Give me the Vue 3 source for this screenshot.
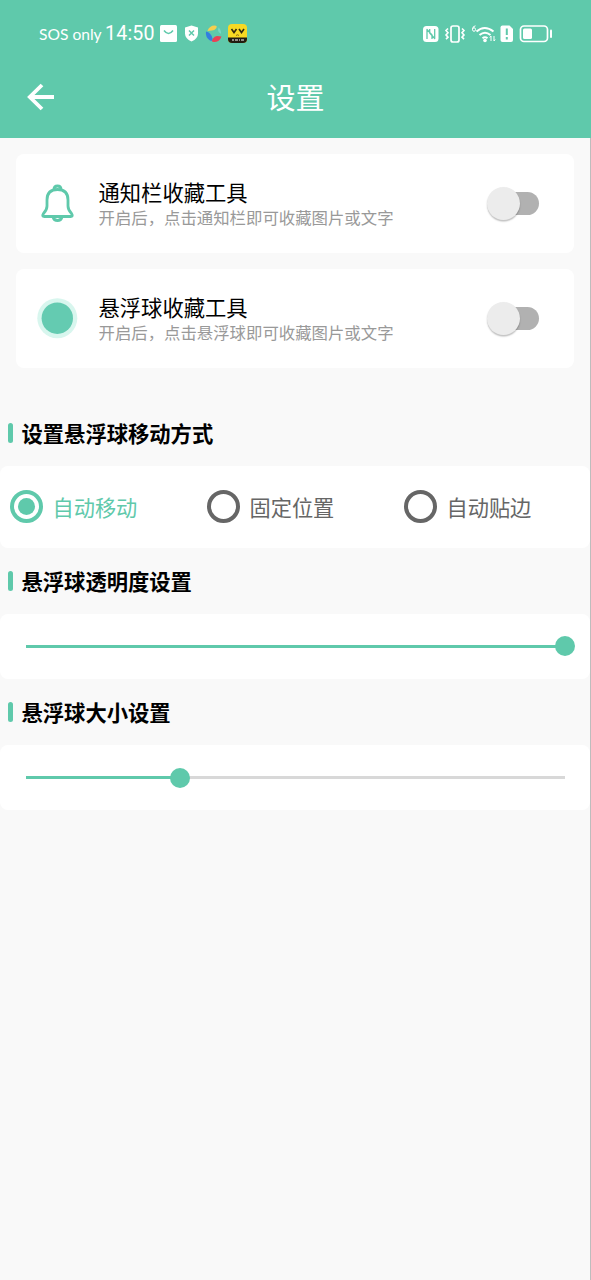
<script setup>
import { ref } from 'vue'

const tools = ref([
  { icon: 'bell', title: '通知栏收藏工具', hint: '开启后，点击通知栏即可收藏图片或文字' },
  { icon: 'ball', title: '悬浮球收藏工具', hint: '开启后，点击悬浮球即可收藏图片或文字' }
])
const modes = ['自动移动', '固定位置', '自动贴边']
const mode = ref('自动移动')
const sliders = ref([
  { title: '悬浮球透明度设置', value: 100 },
  { title: '悬浮球大小设置', value: 28.6 }
])
</script>

<template>
  <div class="screen">
    <header class="header">
      <div class="status">
        <span class="carrier">SOS only</span>
        <span class="clock">14:50</span>
        <svg class="status-left" width="90" height="22" viewBox="0 0 90 22">
          <path d="M1.500 2h14q1.500 0 1.500 1.500v14q0 1.500-1.500 1.500h-14Q0 19 0 17.500v-14Q0 2 1.500 2z" fill="#fff" />
          <path d="M4 7.500q4.500 6 9 0" fill="none" stroke="#5fc9ab" stroke-width="1.500" />
          <path d="M31.500 2.500l6.500 2v6q0 5-6.500 8q-6.500-3-6.500-8v-6z" fill="#fff" />
          <path d="M29 7.500l5 5M34 7.500l-5 5" stroke="#5fc9ab" stroke-width="1.500" />
          <path d="M47.500 8q2-5.500 7-5.500q3.500 0 1.500 3q-1.500 2-4 2t-4.500 .5z" fill="#f5cf50" />
          <path d="M46 8.500q5 1 6.500 7q.2 3.500-2.500 2q-5-3.500-4-9z" fill="#327ee0" />
          <path d="M53 15.500q1.500-2.500 4-2.500t4.500.5q-2 5.500-7.500 5.500q-3.500 0-1-3.500z" fill="#eb4055" />
          <path d="M58.500 4.500q3 2.500 2.500 6.500q-3-1.500-3-4z" fill="#77d7c5" />
          <rect x="68" y="1" width="19" height="19" rx="4" fill="#f8d923" />
          <path d="M68 14.500h19V16q0 4-4 4H72q-4 0-4-4z" fill="#211b10" />
          <path d="M71.500 6l2.500 3.500l2.500-3.500M79 6l2.500 3.500l2.500-3.500" fill="none" stroke="#332a10" stroke-width="1.600" />
          <path d="M76 12.500q1.500-1.500 3 0" fill="none" stroke="#8c6a18" />
          <path d="M72 17h2m1 0h3m1 0h1m1 0h3" stroke="#fff" stroke-width="1.200" />
        </svg>
        <svg class="status-right" width="132" height="22" viewBox="0 0 132 22">
          <rect x="1" y="3" width="15.500" height="16" rx="3.500" fill="#fff" />
          <path d="M5 16V6.500l5 5.500v4M12.700 6v9.500l-5-5.500V6" fill="none" stroke="#5fc9ab" stroke-width="1.300" stroke-linejoin="round" />
          <g fill="none" stroke="#fff">
            <rect x="29" y="3" width="8" height="16" rx="2" stroke-width="1.700" />
            <path d="M26 5.500l-2 2l2 2.200l-2 2.200l2 2.200l-2 2M40 5.500l2 2l-2 2.200l2 2.200l-2 2.200l2 2" stroke-width="1.600" />
            <path d="M53.500 2.800Q50.500 3 50.500 6.500M50.500 6.500a1.500 1.800 0 1 0 3 0a1.500 1.800 0 1 0-3 0" stroke-width="1" />
            <path d="M54.500 8.500q8-7 17 0M57.500 12q5.500-4.500 11 0M60.500 15.200q2.500-2 5 0" stroke-width="2" />
            <path d="M69 13v5M72 18v-5M67.800 14.500l1.200-1.500M73.200 16.500l-1.200 1.500" stroke-width="1" />
          </g>
          <circle cx="63" cy="17.500" r="1.800" fill="#fff" />
          <path d="M80.500 2.500h7l3.500 3.500v11q0 2-2 2h-8.500q-2 0-2-2v-12.500q0-2 2-2z" fill="#fff" />
          <path d="M84.800 5.500v6.500M84.800 14v2.500" stroke="#5fc9ab" stroke-width="2" />
          <rect x="98.500" y="3" width="27" height="15.500" rx="3.500" fill="none" stroke="#fff" stroke-width="1.700" />
          <rect x="101" y="5.500" width="9" height="10.500" rx="1.500" fill="#fff" />
          <path d="M129 7.500v6.500" stroke="#fff" stroke-width="2" stroke-linecap="round" />
        </svg>
      </div>
      <div class="bar">
        <svg class="back" width="30" height="30" viewBox="0 0 30 30">
          <path d="M16 3L3.800 15L16 27M4 15H28" fill="none" stroke="#fff" stroke-width="3.800" />
        </svg>
        <h1>设置</h1>
      </div>
    </header>

    <main class="content">
      <div class="tools">
        <section v-for="t in tools" :key="t.title" class="card">
          <svg v-if="t.icon === 'bell'" class="tool-icon" width="42" height="42" viewBox="0 0 42 42">
            <g fill="none" stroke="#5fc9ab" stroke-width="2.800" stroke-linejoin="round">
              <path d="M11 18q0-10.500 10.500-10.500T32 18v6q0 4 3.500 7.500q2 3-1 3H8.500q-3 0-1-3q3.500-3.500 3.500-7.500z" />
              <path d="M18 7.500q0-3.500 3.500-3.500T25 7.500M17 35q1 3.500 4.500 3.500T26 35" />
            </g>
          </svg>
          <svg v-else class="tool-icon" width="42" height="42" viewBox="0 0 42 42">
            <circle cx="21.300" cy="21.200" r="20" fill="#d8f6ee" />
            <circle cx="21.300" cy="21.200" r="15.700" fill="#64cbb1" />
          </svg>
          <div class="tool-text">
            <h2>{{ t.title }}</h2>
            <p>{{ t.hint }}</p>
          </div>
          <div class="switch"><span class="knob"></span></div>
        </section>
      </div>

      <h3 class="first">设置悬浮球移动方式</h3>
      <div class="panel modes">
        <label v-for="m in modes" :key="m" class="mode" :class="{ active: m === mode }" @click="mode = m">
          <span class="radio"></span>{{ m }}
        </label>
      </div>

      <template v-for="s in sliders" :key="s.title">
        <h3>{{ s.title }}</h3>
        <div class="panel slider">
          <div class="track">
            <div class="fill" :style="{ width: s.value + '%' }"><span class="thumb"></span></div>
          </div>
        </div>
      </template>
    </main>
  </div>
</template>

<style>
body {
  background: #f9f9f9;
}
</style>

<style scoped>
.screen {
  width: 591px;
  height: 1280px;
  overflow: hidden;
  display: flex;
  flex-direction: column;
  background: #f9f9f9;
  font-family: "Noto Sans CJK SC", sans-serif;
}
h1, h2, h3, p { margin: 0; }
svg { display: block; flex: none; }
.header {
  height: 138px;
  flex: none;
  background: #5fc9ab;
  color: #fff;
}
.status {
  height: 67px;
  padding: 0 37px 0 39px;
  display: flex;
  align-items: center;
}
.carrier {
  font: 15.6px/22px Lato, sans-serif;
  width: 66px;
  white-space: nowrap;
}
.clock {
  font: 400 19.6px/22px Roboto, sans-serif;
  letter-spacing: 0.2px;
  width: 55px;
}
.status-right { margin-left: auto; }
.bar {
  height: 60px;
  padding: 0 26px;
  display: grid;
  grid-template-columns: 30px 1fr 30px;
  align-items: center;
}
h1 {
  font-size: 29px;
  line-height: 58px;
  padding-bottom: 2px;
  font-weight: 400;
  text-align: center;
}
.content {
  flex: 1;
  box-sizing: border-box;
  border-right: 1px solid #bdbdbd;
}
.tools {
  padding: 15.5px 16px 0;
  display: flex;
  flex-direction: column;
  gap: 16px;
}
.card {
  height: 99px;
  display: flex;
  align-items: center;
  box-sizing: border-box;
  padding: 0 35px 0 20px;
  border-radius: 8px;
  background: #fff;
}
.tool-text { margin-left: 20.5px; flex: 1; }
h2 {
  font-size: 21.3px;
  line-height: 28px;
  font-weight: 400;
  color: #000;
}
p {
  font-size: 16.4px;
  line-height: 22px;
  color: #999;
  white-space: nowrap;
}
.switch {
  width: 48px;
  height: 23px;
  display: flex;
  align-items: center;
  border-radius: 12px;
  background: #b1b1b1;
}
.knob {
  width: 33px;
  height: 33px;
  flex: none;
  margin-left: -4px;
  border-radius: 50%;
  background: #ececec;
  box-shadow: 0 1.5px 1.5px rgba(0, 0, 0, 0.25);
}
h3 {
  height: 66px;
  display: flex;
  align-items: center;
  gap: 8.5px;
  padding-left: 8px;
  font-size: 21.3px;
  line-height: 30px;
  font-weight: 700;
  color: #000;
}
h3::before {
  content: "";
  width: 5px;
  height: 20px;
  border-radius: 3px;
  background: #5fc9ab;
}
h3.first { padding-top: 32px; }
.panel {
  border-radius: 8px;
  background: #fff;
}
.modes {
  height: 82px;
  display: grid;
  grid-template-columns: repeat(3, 197px);
  overflow: hidden;
}
.mode {
  display: flex;
  align-items: center;
  gap: 10px;
  padding-left: 9.5px;
  font-size: 21.2px;
  color: #666;
}
.radio {
  width: 33px;
  height: 33px;
  box-sizing: border-box;
  border: 4px solid #666;
  border-radius: 50%;
  display: flex;
  align-items: center;
  justify-content: center;
}
.active { color: #5fc9ab; }
.active .radio { border-color: #5fc9ab; }
.active .radio::after {
  content: "";
  width: 17px;
  height: 17px;
  border-radius: 50%;
  background: #5fc9ab;
}
.slider {
  height: 65.4px;
  box-sizing: border-box;
  padding: 0 25.5px 0 26px;
  display: flex;
  align-items: center;
}
.track {
  flex: 1;
  height: 3px;
  background: #d8d8d8;
}
.fill {
  height: 3px;
  display: flex;
  align-items: center;
  justify-content: flex-end;
  background: #5fc9ab;
}
.thumb {
  width: 20px;
  height: 20px;
  flex: none;
  margin-right: -10px;
  border-radius: 50%;
  background: #5fc9ab;
}
</style>
